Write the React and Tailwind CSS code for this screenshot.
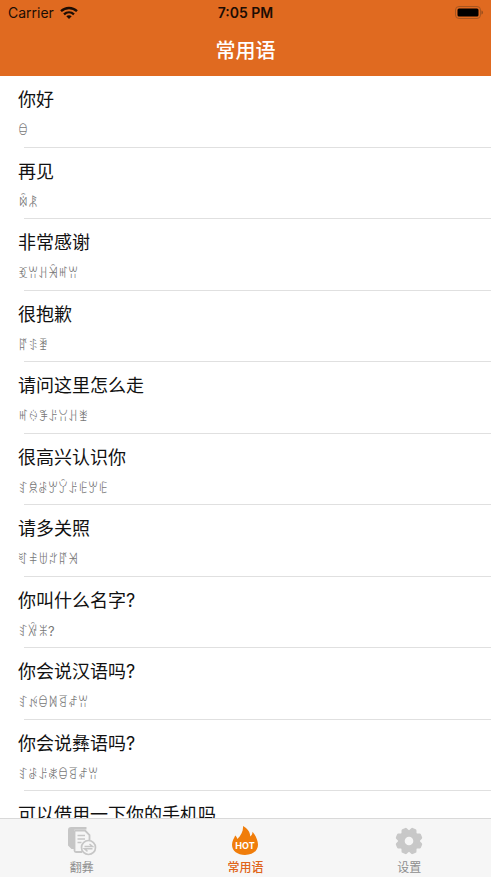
import React from 'react';

const phrases = [
  { zh: '你好', yi: '\uA0EA' },
  { zh: '再见', yi: '\uA247\uA0BF' },
  { zh: '非常感谢', yi: '\uA0F6\uA015\uA0C5\uA200\uA3AD\uA015' },
  { zh: '很抱歉', yi: '\uA365\uA319\uA13F' },
  { zh: '请问这里怎么走', yi: '\uA3AD\uA348\uA288\uA320\uA0CB\uA0C5\uA0E8' },
  { zh: '很高兴认识你', yi: '\uA18F\uA30B\uA0A1\uA3EE\uA325\uA320\uA360\uA3EE\uA360' },
  { zh: '请多关照', yi: '\uA193\uA16A\uA041\uA09D\uA365\uA201' },
  { zh: '你叫什么名字?', yi: '\uA18F\uA45E\uA093?' },
  { zh: '你会说汉语吗?', yi: '\uA18F\uA24C\uA0EA\uA052\uA249\uA443\uA015' },
  { zh: '你会说彝语吗?', yi: '\uA18F\uA0A1\uA320\uA33F\uA0EA\uA249\uA443\uA015' },
  { zh: '可以借用一下你的手机吗' },
];

const WifiIcon = () => (
  <svg className="h-[14px] w-[18px]" viewBox="0 0 18 14" fill="none" stroke="currentColor" strokeWidth="2.3">
    <path d="M1 5.2C5.5.9 12.5.9 17 5.2" />
    <path d="M4 8.3c2.9-2.7 7.1-2.7 10 0" />
    <path d="M6.3 10.2c1.6-1.4 3.8-1.4 5.4 0L9 13z" fill="currentColor" stroke="none" />
  </svg>
);

const BatteryIcon = () => (
  <svg className="h-[14px] w-[28px]" viewBox="0 0 28 14">
    <rect x="0.5" y="0.5" width="25" height="12" rx="3.5" fill="none" stroke="#a8551f" />
    <rect x="2.5" y="2.5" width="21" height="8" rx="1.5" fill="#000" />
    <path d="M26.5 4.5c1.8.6 1.8 3.4 0 4z" fill="#8f4a1c" />
  </svg>
);

const TranslateIcon = () => (
  <svg className="h-[30px] w-[30px]" viewBox="0 0 30 30" fill="none">
    <path d="M4 1h15.5v2.5H7.5V23h-3L1 19.5V4a3 3 0 0 1 3-3z" fill="#c6c6c6" />
    <path d="M7.5 5v19.5A1.500 1.500 0 0 0 9 26h6M7.5 4.500H18L22.5 9v5" stroke="#c6c6c6" strokeWidth="1.8" />
    <path d="M10.5 9.500H18M10.5 13H18M10.5 16.500h4" stroke="#c6c6c6" strokeWidth="1.6" />
    <circle cx="21.5" cy="21.5" r="7" fill="#f6f6f6" stroke="#c6c6c6" strokeWidth="1.7" />
    <path d="M17.5 20.500h8l-3-2.500M25.5 22.800h-8l3 2.500" stroke="#c6c6c6" strokeWidth="1.5" />
  </svg>
);

const HotIcon = () => (
  <svg className="h-[30px] w-[30px]" viewBox="0 0 30 30">
    <path
      d="M13 0c4.500 2.500 7.300 6 7.200 10.500 1.600-1 2.300-2.700 2.300-4.700 3.200 3.500 5.500 8.500 5.500 13C28 25 22.500 29 15 29S2 25 2 18.800c0-3.800 2-6.300 3.200-9.300 1.200 1 1.900 2.200 2.200 3.500C11 9.500 13.500 5 13 0z"
      fill="#f07d0a"
    />
    <text x="15" y="23" textAnchor="middle" fontFamily="Inter, sans-serif" fontSize="9" fontWeight="700" fill="#fff">
      HOT
    </text>
  </svg>
);

const GearIcon = () => (
  <svg className="h-[30px] w-[30px]" viewBox="0 0 30 30">
    <g fill="#c8c8c8">
      <circle cx="15" cy="15" r="10.5" />
      {[22.5, 67.5, 112.5, 157.5, 202.5, 247.5, 292.5, 337.5].map((a) => (
        <path key={a} d="M10.5 6l1.700-3.700q.3-.8 1.200-.8h3.200q.9 0 1.200.8l1.700 3.700z" transform={`rotate(${a} 15 15)`} />
      ))}
    </g>
    <circle cx="15" cy="15" r="4.3" fill="#f6f6f6" />
  </svg>
);

const tabs = [
  { id: 'translate', label: '翻彝', icon: TranslateIcon },
  { id: 'phrases', label: '常用语', icon: HotIcon },
  { id: 'settings', label: '设置', icon: GearIcon },
];

const PhraseRow = ({ phrase }) => (
  <li className="flex shrink-0 flex-col odd:h-[72px] even:h-[71px]">
    <div className="flex-1 pt-[11px] pl-[18px]">
      <h2 className="text-[18px] leading-[26px] text-[#111]">{phrase.zh}</h2>
      {phrase.yi && <p className="mt-1 text-[13px] leading-[26px] text-[#777]">{phrase.yi}</p>}
    </div>
    <div className="ml-6 h-px bg-[#e0e0e0]" />
  </li>
);

export default function App() {
  const [active, setActive] = React.useState('phrases');

  return (
    <div className="flex h-screen flex-col bg-white font-['Inter','Noto_Sans_CJK_SC',sans-serif]">
      <header className="shrink-0 bg-[#e06a20]">
        <div className="grid h-[26px] grid-cols-3 items-center px-2 text-[14px] leading-[26px] text-[#1c0d04]">
          <div className="flex items-center gap-1.5">
            <span>Carrier</span>
            <WifiIcon />
          </div>
          <span className="text-center font-semibold">7:05 PM</span>
          <div className="flex justify-end">
            <BatteryIcon />
          </div>
        </div>
        <h1 className="h-[50px] text-center text-[20px] leading-[50px] font-medium text-white">常用语</h1>
      </header>

      <ul className="flex min-h-0 flex-1 flex-col overflow-hidden">
        {phrases.map((p) => (
          <PhraseRow key={p.zh} phrase={p} />
        ))}
      </ul>

      <nav className="grid h-[59px] shrink-0 grid-cols-3 border-t border-[#d9d9d9] bg-[#f6f6f6]">
        {tabs.map(({ id, label, icon: Icon }) => (
          <button
            key={id}
            type="button"
            onClick={() => setActive(id)}
            className={`flex flex-col items-center pt-[7px] text-[12px] leading-[16px] ${
              active === id ? 'font-medium text-[#e0641a]' : 'text-[#8e8e8e]'
            }`}
          >
            <Icon />
            <span className="mt-1">{label}</span>
          </button>
        ))}
      </nav>
    </div>
  );
}
